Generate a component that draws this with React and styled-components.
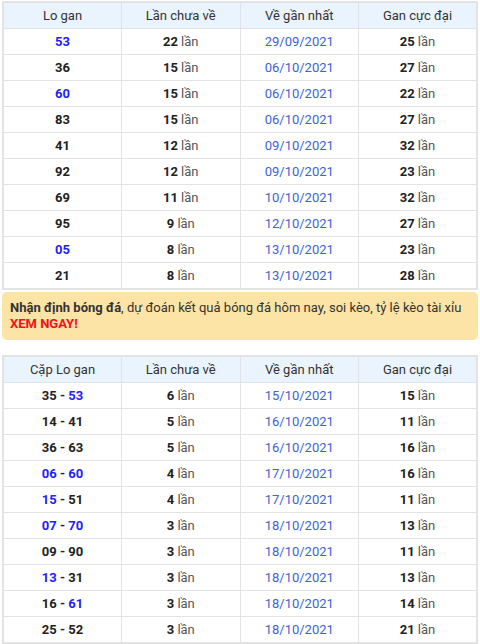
import React from 'react';
import styled, { createGlobalStyle } from 'styled-components';

const GlobalStyle = createGlobalStyle`
  body {
    margin: 0;
    background: #fff;
    font-family: Roboto, 'Liberation Sans', Arial, sans-serif;
    color: #222;
  }
`;

const Page = styled.div`
  padding: 1px 2px 0 2px;
  width: 476px;
`;

const Table = styled.table`
  width: 100%;
  border-collapse: collapse;
  table-layout: fixed;
  border: 2px solid #e3e3e3;
  font-size: 13px;
  margin-bottom: ${p => p.$gap || 0}px;
`;

const HeadCell = styled.th`
  height: 25px;
  padding: 0;
  background: #eaf4fe;
  border: 1px solid #dfe3e8;
  font-weight: 400;
  color: #333;
  text-align: center;
`;

const Cell = styled.td`
  height: 25px;
  padding: 0;
  border: 1px solid #e3e3e3;
  text-align: center;
  font-weight: 700;
  color: #222;
`;

const Num = styled.span`
  font-weight: 700;
  color: ${p => (p.$blue ? '#1f22f5' : '#222')};
`;

const Times = styled.span`
  font-weight: 400;
  color: #555;
`;

const DateText = styled.span`
  font-weight: 400;
  color: #3d63d2;
`;

const Notice = styled.div`
  margin: 2px 0 15px 0;
  padding: 8px 8px;
  background: #fce3a6;
  border-radius: 5px;
  font-size: 13px;
  line-height: 16px;
  color: #333;
`;

const Strong = styled.b`
  font-weight: 700;
`;

const Red = styled.b`
  color: #f2101a;
  font-weight: 700;
`;

const gan = [
  ['53', true, 22, '29/09/2021', 25],
  ['36', false, 15, '06/10/2021', 27],
  ['60', true, 15, '06/10/2021', 22],
  ['83', false, 15, '06/10/2021', 27],
  ['41', false, 12, '09/10/2021', 32],
  ['92', false, 12, '09/10/2021', 23],
  ['69', false, 11, '10/10/2021', 32],
  ['95', false, 9, '12/10/2021', 27],
  ['05', true, 8, '13/10/2021', 23],
  ['21', false, 8, '13/10/2021', 28],
];

const pairs = [
  [['35', false], ['53', true], 6, '15/10/2021', 15],
  [['14', false], ['41', false], 5, '16/10/2021', 11],
  [['36', false], ['63', false], 5, '16/10/2021', 16],
  [['06', true], ['60', true], 4, '17/10/2021', 16],
  [['15', true], ['51', false], 4, '17/10/2021', 11],
  [['07', true], ['70', true], 3, '18/10/2021', 13],
  [['09', false], ['90', false], 3, '18/10/2021', 11],
  [['13', true], ['31', false], 3, '18/10/2021', 13],
  [['16', false], ['61', true], 3, '18/10/2021', 14],
  [['25', false], ['52', false], 3, '18/10/2021', 21],
];

const Lan = ({ n }) => (
  <>
    {n} <Times>lần</Times>
  </>
);

const Head = ({ first }) => (
  <thead>
    <tr>
      <HeadCell>{first}</HeadCell>
      <HeadCell>Lần chưa về</HeadCell>
      <HeadCell>Về gần nhất</HeadCell>
      <HeadCell>Gan cực đại</HeadCell>
    </tr>
  </thead>
);

const App = () => {
  return (
    <Page>
      <GlobalStyle />
      <Table>
        <Head first="Lo gan" />
        <tbody>
          {gan.map(([num, blue, miss, date, max]) => (
            <tr key={num}>
              <Cell><Num $blue={blue}>{num}</Num></Cell>
              <Cell><Lan n={miss} /></Cell>
              <Cell><DateText>{date}</DateText></Cell>
              <Cell><Lan n={max} /></Cell>
            </tr>
          ))}
        </tbody>
      </Table>

      <Notice>
        <Strong>Nhận định bóng đá</Strong>, dự đoán kết quả bóng đá hôm nay, soi kèo, tỷ lệ kèo tài xỉu{' '}
        <Red>XEM NGAY!</Red>
      </Notice>

      <Table>
        <Head first="Cặp Lo gan" />
        <tbody>
          {pairs.map(([a, b, miss, date, max]) => (
            <tr key={a[0] + b[0]}>
              <Cell>
                <Num $blue={a[1]}>{a[0]}</Num> - <Num $blue={b[1]}>{b[0]}</Num>
              </Cell>
              <Cell><Lan n={miss} /></Cell>
              <Cell><DateText>{date}</DateText></Cell>
              <Cell><Lan n={max} /></Cell>
            </tr>
          ))}
        </tbody>
      </Table>
    </Page>
  );
};

export default App;
